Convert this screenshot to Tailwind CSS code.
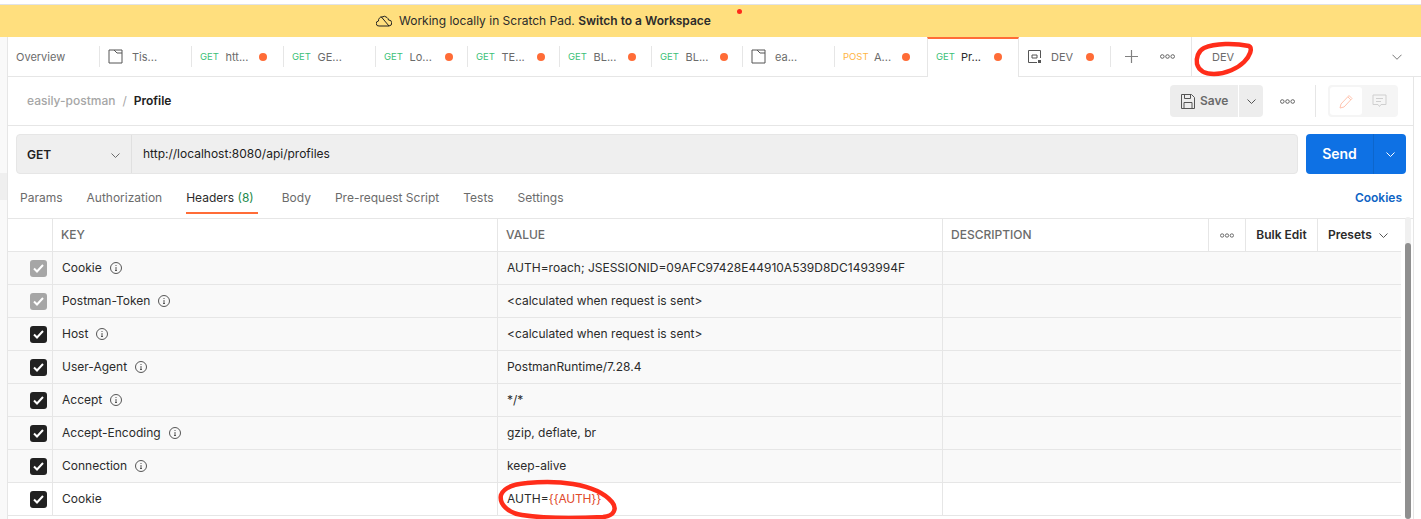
<!DOCTYPE html>
<html><head><meta charset="utf-8">
<script src="https://cdn.jsdelivr.net/npm/@tailwindcss/browser@4"></script>
</head>
<body class="m-0 bg-white">
<div class="relative w-[1421px] h-[519px] overflow-hidden flex flex-col font-['Inter',sans-serif] text-[12px] leading-[16px] text-[#6b6b6b] bg-white">
  <div class="h-[5px] shrink-0 bg-white border-b border-[#e0e3e8]"></div>
  <div class="h-[32px] shrink-0 bg-[#ffdf7e] flex items-center pl-[376px] gap-[7px] text-[#2b2b2b] text-[12px]">
    <svg width="16" height="12" viewBox="0 0 16 12" fill="none" stroke="#212121" stroke-width="1"><path d="M4 11H3a2.500 2.500 0 0 1-.5-5 3.500 3.500 0 0 1 3.500-4 4 4 0 0 1 5 .5 3.500 3.500 0 0 1 1.500 2.500 3 3 0 0 1 .5 6H4z"/><path d="M5 1.500l8 9.500"/></svg>
    <span>Working locally in Scratch Pad. <b class="font-semibold">Switch to a Workspace</b></span>
  </div>
  <div class="flex-1 flex min-h-0">
    <div class="w-[8px] shrink-0 bg-[#f9f9f9] border-r border-[#e6e6e6] flex flex-col">
      <div class="h-[136px] shrink-0"></div>
      <div class="h-[27px] shrink-0 bg-[#efefef]"></div>
    </div>
    <div class="flex-1 min-w-0 flex flex-col">
      <!-- tab strip -->
      <div class="h-[40px] shrink-0 flex text-[11px]">
        <div class="flex h-full w-[1183px] border-b border-[#e6e6e6]">
          <div class="w-[92px] shrink-0 flex items-center pl-[8px]">Overview<span class="ml-auto h-[21px] w-px bg-[#e6e6e6]"></span></div>
          <div class="w-[92px] shrink-0 flex items-center pl-[8px]"><svg class="mr-[9px]" width="15" height="15" viewBox="0 0 15 15" fill="none" stroke="#555" stroke-width="1"><path d="M1 1h13v13H1zM6 1l3 3h5"/></svg>Tis...<span class="ml-auto h-[21px] w-px bg-[#e6e6e6]"></span></div>
          <div class="w-[92px] shrink-0 flex items-center pl-[8px]"><span class="text-[9.5px] text-[#3cbf78] w-[25.5px]">GET</span>htt...<span class="ml-[11px] size-[8px] rounded-full bg-[#ff6c37]"></span><span class="ml-auto h-[21px] w-px bg-[#e6e6e6]"></span></div>
          <div class="w-[92px] shrink-0 flex items-center pl-[8px]"><span class="text-[9.5px] text-[#3cbf78] w-[25.5px]">GET</span>GE...<span class="ml-auto h-[21px] w-px bg-[#e6e6e6]"></span></div>
          <div class="w-[92px] shrink-0 flex items-center pl-[8px]"><span class="text-[9.5px] text-[#3cbf78] w-[25.5px]">GET</span>Lo...<span class="ml-[13px] size-[8px] rounded-full bg-[#ff6c37]"></span><span class="ml-auto h-[21px] w-px bg-[#e6e6e6]"></span></div>
          <div class="w-[92px] shrink-0 flex items-center pl-[8px]"><span class="text-[9.5px] text-[#3cbf78] w-[25.5px]">GET</span>TE...<span class="ml-[12px] size-[8px] rounded-full bg-[#ff6c37]"></span><span class="ml-auto h-[21px] w-px bg-[#e6e6e6]"></span></div>
          <div class="w-[92px] shrink-0 flex items-center pl-[8px]"><span class="text-[9.5px] text-[#3cbf78] w-[25.5px]">GET</span>BL...<span class="ml-[12px] size-[8px] rounded-full bg-[#ff6c37]"></span><span class="ml-auto h-[21px] w-px bg-[#e6e6e6]"></span></div>
          <div class="w-[91px] shrink-0 flex items-center pl-[8px]"><span class="text-[9.5px] text-[#3cbf78] w-[25.5px]">GET</span>BL...<span class="ml-[12px] size-[8px] rounded-full bg-[#ff6c37]"></span><span class="ml-auto h-[21px] w-px bg-[#e6e6e6]"></span></div>
          <div class="w-[92px] shrink-0 flex items-center pl-[8px]"><svg class="mr-[9px]" width="15" height="15" viewBox="0 0 15 15" fill="none" stroke="#555" stroke-width="1"><path d="M1 1h13v13H1zM6 1l3 3h5"/></svg>ea...<span class="ml-auto h-[21px] w-px bg-[#e6e6e6]"></span></div>
          <div class="w-[92px] shrink-0 flex items-center pl-[8px]"><span class="text-[9.5px] text-[#ffb443] w-[31px]">POST</span>A...<span class="ml-[11px] size-[8px] rounded-full bg-[#ff6c37]"></span></div>
          <div class="w-[92px] shrink-0 -mb-px flex items-center pl-[8px] border-t-2 border-[#ff6c37] border-x border-x-[#e6e6e6] bg-white pb-[2px] text-[#2b2b2b]"><span class="text-[9.5px] text-[#3cbf78] w-[25px]">GET</span>Pr...<span class="ml-[13px] size-[8px] rounded-full bg-[#ff6c37]"></span></div>
          <div class="w-[92px] shrink-0 flex items-center pl-[8px]"><svg class="mr-[9px]" width="15" height="15" viewBox="0 0 15 15" fill="none" stroke="#555" stroke-width="1"><path d="M13.500 9V1.500H1.500v12H10"/><path d="M5 6h5v3H5z"/><rect x="11" y="11" width="3" height="3" fill="#555" stroke="none"/></svg>DEV<span class="ml-[13px] size-[8px] rounded-full bg-[#ff6c37]"></span><span class="ml-auto h-[21px] w-px bg-[#e6e6e6]"></span></div>
          <div class="flex-1 flex items-center pl-[14px] pr-0">
            <svg width="13" height="13" viewBox="0 0 13 13" stroke="#808080" stroke-width="1.2"><path d="M6.500 0v13M0 6.500h13"/></svg>
            <svg class="ml-[22px]" width="15" height="5" viewBox="0 0 15 5" fill="none" stroke="#555" stroke-width=".9"><circle cx="2.300" cy="2.500" r="1.800"/><circle cx="7.500" cy="2.500" r="1.800"/><circle cx="12.700" cy="2.500" r="1.800"/></svg>
          </div>
        </div>
        <div class="flex-1 h-full flex items-center border-l border-[#e6e6e6] border-b pl-[20px] pr-[19px]"><span>DEV</span><svg class="ml-auto" width="10" height="6" viewBox="0 0 11 6" fill="none" stroke="#6b6b6b"><path d="M.5.500l5 5 5-5"/></svg></div>
      </div>
      <div class="flex-1 min-h-0 flex flex-col border-r border-[#e6e6e6] mr-[7px]">
        <!-- title row -->
        <div class="h-[49px] shrink-0 border-b border-[#e6e6e6] flex items-center pl-[19px] pr-[15px]">
          <span class="text-[#a6a6a6] font-medium">easily-postman</span><span class="mx-[7px] text-[#a6a6a6]">/</span><span class="font-semibold text-[#212121]">Profile</span>
          <div class="ml-auto flex items-center">
            <div class="h-[32px] w-[68px] rounded-l-[4px] bg-[#ededed] flex items-center pl-[11px] gap-[5px] font-semibold text-[#6b6b6b]">
              <svg width="14" height="15" viewBox="0 0 14 15" fill="none" stroke="#555" stroke-width="1"><path d="M.5.500h10l3 3v11H.5zM3.500.500v4h6v-4M3 14.500v-6h8v6"/></svg>Save
            </div>
            <div class="ml-px h-[32px] w-[24px] rounded-r-[4px] bg-[#ededed] flex items-center justify-center"><svg width="9" height="5" viewBox="0 0 9 5" fill="none" stroke="#555"><path d="M.5.500l4 4 4-4"/></svg></div>
            <svg class="ml-[17px]" width="15" height="5" viewBox="0 0 15 5" fill="none" stroke="#555" stroke-width=".9"><circle cx="2.300" cy="2.500" r="1.800"/><circle cx="7.500" cy="2.500" r="1.800"/><circle cx="12.700" cy="2.500" r="1.800"/></svg>
            <span class="ml-[20px] h-[32px] w-px bg-[#e6e6e6]"></span>
            <div class="ml-[12px] h-[32px] w-[70px] rounded-[4px] bg-[#f5f5f5] flex p-[2px]">
              <div class="w-[32px] rounded-[3px] bg-white flex items-center justify-center"><svg width="15" height="15" viewBox="0 0 15 15" fill="none" stroke="#ffc4af" stroke-width="1"><path d="M1 14l1-4 8-8.500 3 3L5 13z"/><path d="M9 3l3 3"/></svg></div>
              <div class="flex-1 flex items-center justify-center"><svg width="15" height="14" viewBox="0 0 15 14" fill="none" stroke="#cfcfcf" stroke-width="1"><path d="M1 1h13v9.500H9l-1.500 2-1.500-2H1zM4 4.500h7M4 7.500h5"/></svg></div>
            </div>
          </div>
        </div>
        <!-- url row -->
        <div class="h-[48px] shrink-0 pt-[8px] pl-[8px] pr-[0px] flex">
          <div class="h-[40px] w-[1282px] flex rounded-[4px] bg-[#efefef] border border-[#e6e6e6] text-[#212121]">
            <div class="w-[115px] shrink-0 border-r border-[#e0e0e0] flex items-center pl-[10px] pr-[11px] pt-[2px] font-semibold"><span>GET</span><svg class="ml-auto" width="9" height="5" viewBox="0 0 9 5" fill="none" stroke="#6b6b6b"><path d="M.5.500l4 4 4-4"/></svg></div>
            <div class="flex-1 flex items-center pl-[11px] pb-[1px]">http://localhost:8080/api/profiles</div>
          </div>
          <div class="ml-[8px] h-[40px] w-[100px] rounded-[4px] bg-[#0e71e4] flex text-white">
            <div class="flex-1 flex items-center justify-center text-[14px] font-semibold">Send</div>
            <div class="w-[33px] border-l border-[#0d66cc] flex items-center justify-center"><svg width="9" height="5" viewBox="0 0 9 5" fill="none" stroke="#fff"><path d="M.5.500l4 4 4-4"/></svg></div>
          </div>
        </div>
        <!-- subtabs -->
        <div class="h-[45px] shrink-0 border-b border-[#e6e6e6] flex pl-[12px] items-center gap-[24px] pt-[4px] -mr-px">
          <span>Params</span><span>Authorization</span>
          <span class="relative pr-[4px] text-[#2b2b2b]">Headers <span class="text-[#1e8a4c]">(8)</span><span class="absolute left-0 right-0 top-[22px] h-[2px] bg-[#ff6c37]"></span></span>
          <span>Body</span><span>Pre-request Script</span><span>Tests</span><span>Settings</span>
          <span class="ml-auto font-semibold text-[#0e63c4] mr-[12px]">Cookies</span>
        </div>
        <!-- table -->
        <div class="relative flex-1 min-h-0">
          <div class="w-[1393px] text-[#2b2b2b]">
            <div class="h-[33px] flex border-b border-[#e6e6e6] font-medium text-[#6b6b6b]">
              <div class="w-[45px] border-r border-[#e6e6e6]"></div>
              <div class="w-[445px] border-r border-[#e6e6e6] flex items-center pl-[8px]">KEY</div>
              <div class="w-[445px] border-r border-[#e6e6e6] flex items-center pl-[8px]">VALUE</div>
              <div class="w-[266px] border-r border-[#e6e6e6] flex items-center pl-[8px]">DESCRIPTION</div>
              <div class="w-[37px] border-r border-[#e6e6e6] flex items-center justify-center"><svg width="14" height="5" viewBox="0 0 15 5" fill="none" stroke="#555" stroke-width=".9"><circle cx="2.300" cy="2.500" r="1.800"/><circle cx="7.500" cy="2.500" r="1.800"/><circle cx="12.700" cy="2.500" r="1.800"/></svg></div>
              <div class="w-[72px] border-r border-[#e6e6e6] flex items-center justify-center font-semibold text-[#2b2b2b]">Bulk Edit</div>
              <div class="flex-1 flex items-center pl-[10px] font-semibold text-[#2b2b2b]">Presets<svg class="ml-[7px]" width="9" height="5" viewBox="0 0 9 5" fill="none" stroke="#555"><path d="M.5.500l4 4 4-4"/></svg></div>
            </div>
            <!-- rows -->
            <div class="h-[33px] flex border-b border-[#e6e6e6] bg-[#f9f9f9]"><div class="w-[45px] border-r border-[#e6e6e6] flex items-center justify-end pr-[5px]"><div class="size-[17px] rounded-[3px] bg-[#a6a6a6] flex items-center justify-center"><svg width="11" height="9" viewBox="0 0 11 9" fill="none" stroke="#fff" stroke-width="2"><path d="M1 4.500l3 3 6-6.500"/></svg></div></div><div class="w-[445px] border-r border-[#e6e6e6] flex items-center pl-[9px] gap-[8px]">Cookie<svg width="12" height="12" viewBox="0 0 12 12" fill="none" stroke="#555"><circle cx="6" cy="6" r="5.500"/><path d="M6 5v3.500M5 8.500h2M6 3v1"/></svg></div><div class="w-[445px] border-r border-[#e6e6e6] flex items-center pl-[9px]">AUTH=roach; JSESSIONID=09AFC97428E44910A539D8DC1493994F</div><div class="flex-1"></div></div>
            <div class="h-[33px] flex border-b border-[#e6e6e6] bg-[#f9f9f9]"><div class="w-[45px] border-r border-[#e6e6e6] flex items-center justify-end pr-[5px]"><div class="size-[17px] rounded-[3px] bg-[#a6a6a6] flex items-center justify-center"><svg width="11" height="9" viewBox="0 0 11 9" fill="none" stroke="#fff" stroke-width="2"><path d="M1 4.500l3 3 6-6.500"/></svg></div></div><div class="w-[445px] border-r border-[#e6e6e6] flex items-center pl-[9px] gap-[8px]">Postman-Token<svg width="12" height="12" viewBox="0 0 12 12" fill="none" stroke="#555"><circle cx="6" cy="6" r="5.500"/><path d="M6 5v3.500M5 8.500h2M6 3v1"/></svg></div><div class="w-[445px] border-r border-[#e6e6e6] flex items-center pl-[9px]">&lt;calculated when request is sent&gt;</div><div class="flex-1"></div></div>
            <div class="h-[33px] flex border-b border-[#e6e6e6] bg-[#f9f9f9]"><div class="w-[45px] border-r border-[#e6e6e6] flex items-center justify-end pr-[5px]"><div class="size-[17px] rounded-[3px] bg-[#212121] flex items-center justify-center"><svg width="11" height="9" viewBox="0 0 11 9" fill="none" stroke="#fff" stroke-width="2"><path d="M1 4.500l3 3 6-6.500"/></svg></div></div><div class="w-[445px] border-r border-[#e6e6e6] flex items-center pl-[9px] gap-[8px]">Host<svg width="12" height="12" viewBox="0 0 12 12" fill="none" stroke="#555"><circle cx="6" cy="6" r="5.500"/><path d="M6 5v3.500M5 8.500h2M6 3v1"/></svg></div><div class="w-[445px] border-r border-[#e6e6e6] flex items-center pl-[9px]">&lt;calculated when request is sent&gt;</div><div class="flex-1"></div></div>
            <div class="h-[33px] flex border-b border-[#e6e6e6] bg-[#f9f9f9]"><div class="w-[45px] border-r border-[#e6e6e6] flex items-center justify-end pr-[5px]"><div class="size-[17px] rounded-[3px] bg-[#212121] flex items-center justify-center"><svg width="11" height="9" viewBox="0 0 11 9" fill="none" stroke="#fff" stroke-width="2"><path d="M1 4.500l3 3 6-6.500"/></svg></div></div><div class="w-[445px] border-r border-[#e6e6e6] flex items-center pl-[9px] gap-[8px]">User-Agent<svg width="12" height="12" viewBox="0 0 12 12" fill="none" stroke="#555"><circle cx="6" cy="6" r="5.500"/><path d="M6 5v3.500M5 8.500h2M6 3v1"/></svg></div><div class="w-[445px] border-r border-[#e6e6e6] flex items-center pl-[9px]">PostmanRuntime/7.28.4</div><div class="flex-1"></div></div>
            <div class="h-[33px] flex border-b border-[#e6e6e6] bg-[#f9f9f9]"><div class="w-[45px] border-r border-[#e6e6e6] flex items-center justify-end pr-[5px]"><div class="size-[17px] rounded-[3px] bg-[#212121] flex items-center justify-center"><svg width="11" height="9" viewBox="0 0 11 9" fill="none" stroke="#fff" stroke-width="2"><path d="M1 4.500l3 3 6-6.500"/></svg></div></div><div class="w-[445px] border-r border-[#e6e6e6] flex items-center pl-[9px] gap-[8px]">Accept<svg width="12" height="12" viewBox="0 0 12 12" fill="none" stroke="#555"><circle cx="6" cy="6" r="5.500"/><path d="M6 5v3.500M5 8.500h2M6 3v1"/></svg></div><div class="w-[445px] border-r border-[#e6e6e6] flex items-center pl-[9px]">*/*</div><div class="flex-1"></div></div>
            <div class="h-[33px] flex border-b border-[#e6e6e6] bg-[#f9f9f9]"><div class="w-[45px] border-r border-[#e6e6e6] flex items-center justify-end pr-[5px]"><div class="size-[17px] rounded-[3px] bg-[#212121] flex items-center justify-center"><svg width="11" height="9" viewBox="0 0 11 9" fill="none" stroke="#fff" stroke-width="2"><path d="M1 4.500l3 3 6-6.500"/></svg></div></div><div class="w-[445px] border-r border-[#e6e6e6] flex items-center pl-[9px] gap-[8px]">Accept-Encoding<svg width="12" height="12" viewBox="0 0 12 12" fill="none" stroke="#555"><circle cx="6" cy="6" r="5.500"/><path d="M6 5v3.500M5 8.500h2M6 3v1"/></svg></div><div class="w-[445px] border-r border-[#e6e6e6] flex items-center pl-[9px]">gzip, deflate, br</div><div class="flex-1"></div></div>
            <div class="h-[33px] flex border-b border-[#e6e6e6] bg-[#f9f9f9]"><div class="w-[45px] border-r border-[#e6e6e6] flex items-center justify-end pr-[5px]"><div class="size-[17px] rounded-[3px] bg-[#212121] flex items-center justify-center"><svg width="11" height="9" viewBox="0 0 11 9" fill="none" stroke="#fff" stroke-width="2"><path d="M1 4.500l3 3 6-6.500"/></svg></div></div><div class="w-[445px] border-r border-[#e6e6e6] flex items-center pl-[9px] gap-[8px]">Connection<svg width="12" height="12" viewBox="0 0 12 12" fill="none" stroke="#555"><circle cx="6" cy="6" r="5.500"/><path d="M6 5v3.500M5 8.500h2M6 3v1"/></svg></div><div class="w-[445px] border-r border-[#e6e6e6] flex items-center pl-[9px]">keep-alive</div><div class="flex-1"></div></div>
            <div class="h-[33px] flex border-b border-[#e6e6e6] bg-white"><div class="w-[45px] border-r border-[#e6e6e6] flex items-center justify-end pr-[5px]"><div class="size-[17px] rounded-[3px] bg-[#212121] flex items-center justify-center"><svg width="11" height="9" viewBox="0 0 11 9" fill="none" stroke="#fff" stroke-width="2"><path d="M1 4.500l3 3 6-6.500"/></svg></div></div><div class="w-[445px] border-r border-[#e6e6e6] flex items-center pl-[9px]">Cookie</div><div class="w-[445px] border-r border-[#e6e6e6] flex items-center pl-[9px]">AUTH=<span class="text-[#e0492b] tracking-[-0.2px]">{{AUTH}}</span></div><div class="flex-1"></div></div>
          </div>
          <!-- scrollbar -->
          <div class="absolute right-[2px] top-[-2px] bottom-0 w-[6px] rounded-[3px] bg-[#f0f0f0]"><div class="absolute left-0 right-0 top-[26px] bottom-0 bg-[#8f8f8f] rounded-[3px]"></div></div>
        </div>
      </div>
    </div>
  </div>
  <!-- annotation overlays -->
  <span class="absolute left-[737px] top-[9px] size-[5px] rounded-full bg-[#ff2a1a]"></span>
  <svg class="absolute left-[1190px] top-[38px]" width="66" height="44" viewBox="0 0 66 44" fill="none" stroke="#ff2d1a" stroke-width="4.500" stroke-linecap="round"><path d="M59 8C45 5 25 5 14 10 8 13 6 20 7 26c2 7 8 10 17 10 12 0 24-6 30-12 6-6 9-14 5-16"/></svg>
  <svg class="absolute left-[490px] top-[478px]" width="135" height="41" viewBox="0 0 135 41" fill="none" stroke="#ff2d1a" stroke-width="4.500" stroke-linecap="round"><path d="M37 5C25 6 14 9 11 17c-2 9 7 18 21 20 26 4 63 3 81 2 12-1 14-9 9-15C112 12 95 8 83 6 65 3 48 4 37 5"/></svg>
</div>
</body></html>
